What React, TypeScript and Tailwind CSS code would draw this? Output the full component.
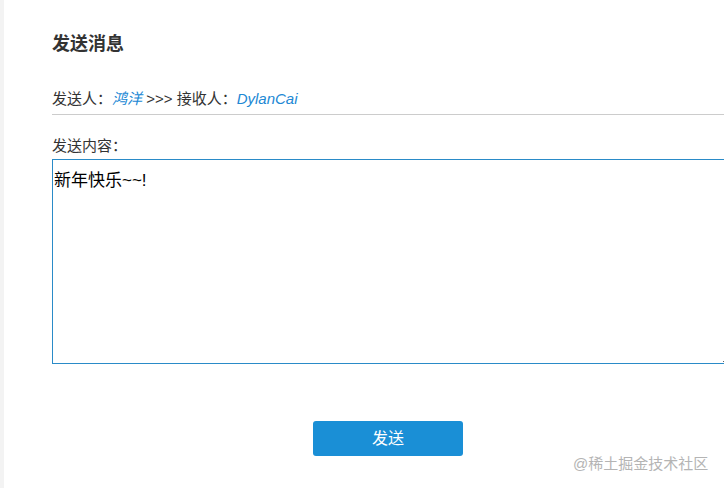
import React from "react";

const font = { fontFamily: '"Liberation Sans", "Noto Sans CJK SC", sans-serif' };

const App: React.FC = () => {
  return (
    <div
      className="relative flex h-[488px] w-[724px] overflow-hidden bg-white text-[#333]"
      style={font}
    >
      <div className="w-[4px] shrink-0 bg-[#f3f3f3]" />
      <div className="flex w-[720px] shrink-0 flex-col pl-[48px]">
        <h1 className="mt-[32px] h-[24px] text-[18px] font-bold leading-[24px] text-[#333]">
          发送消息
        </h1>
        <div className="mt-[32px] h-[22px] text-[15px] leading-[22px] text-[#333]">
          发送人：<span className="italic text-[#2188d4]">鸿洋</span> &gt;&gt;&gt; 接收人：
          <span className="italic text-[#2188d4]">DylanCai</span>
        </div>
        <div className="mt-[4px] h-[1px] w-[676px] bg-[#cccccc]" />
        <div className="mt-[21px] h-[20px] text-[15px] leading-[20px] text-[#333]">
          发送内容：
        </div>
        <textarea
          className="mt-[3px] h-[205px] w-[680px] shrink-0 resize-y border border-[#2a8bc8] px-[1px] pt-[11px] text-[17px] leading-[20px] text-black outline-none"
          style={font}
          defaultValue="新年快乐~~!"
          readOnly
        />
        <div className="mt-[57px] flex justify-center">
          <button className="h-[35px] w-[150px] rounded-[3px] bg-[#1a8fd6] text-[16px] text-white">
            发送
          </button>
        </div>
      </div>
      <div className="absolute left-[573px] top-[454px] text-[15px] leading-[20px] text-[#b4b4b4]">
        @稀土掘金技术社区
      </div>
    </div>
  );
};

export default App;
